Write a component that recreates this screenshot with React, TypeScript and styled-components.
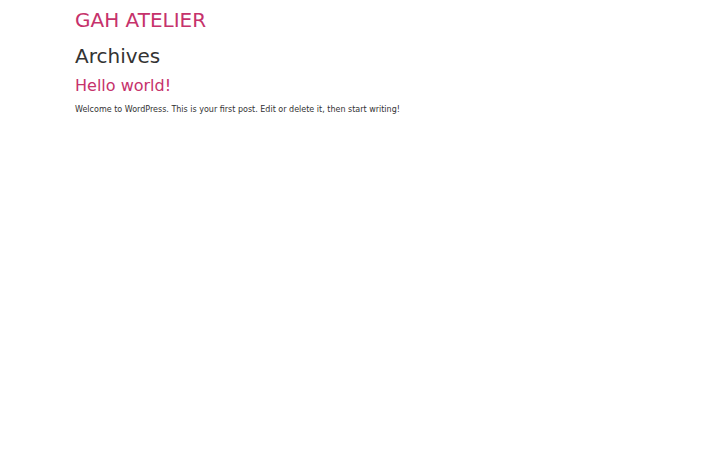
import styled, { createGlobalStyle } from "styled-components";

const GlobalStyle = createGlobalStyle`
  html, body {
    margin: 0;
    padding: 0;
    background: #fff;
    font-family: "DejaVu Sans", sans-serif;
    color: #333;
  }
`;

const Page = styled.div`
  max-width: 570px;
  margin: 0 auto;
  padding-top: 6px;
`;

const SiteTitle = styled.a`
  display: block;
  color: #c6326b;
  font-size: 20px;
  line-height: 28px;
  text-decoration: none;
`;

const PageTitle = styled.h1`
  margin: 8px 0 0;
  font-size: 20px;
  font-weight: normal;
  line-height: 28px;
  color: #333;
`;

const PostTitle = styled.h2`
  margin: 4px 0 0;
  font-size: 16px;
  font-weight: normal;
  line-height: 24px;
  color: #c6326b;
`;

const Excerpt = styled.p`
  margin: 6px 0 0;
  font-size: 8px;
  line-height: 12px;
  color: #333;
`;

export default function App() {
  return (
    <>
      <GlobalStyle />
      <Page>
        <SiteTitle href="#">GAH ATELIER</SiteTitle>
        <PageTitle>Archives</PageTitle>
        <article>
          <PostTitle>Hello world!</PostTitle>
          <Excerpt>
            Welcome to WordPress. This is your first post. Edit or delete it, then start writing!
          </Excerpt>
        </article>
      </Page>
    </>
  );
}
